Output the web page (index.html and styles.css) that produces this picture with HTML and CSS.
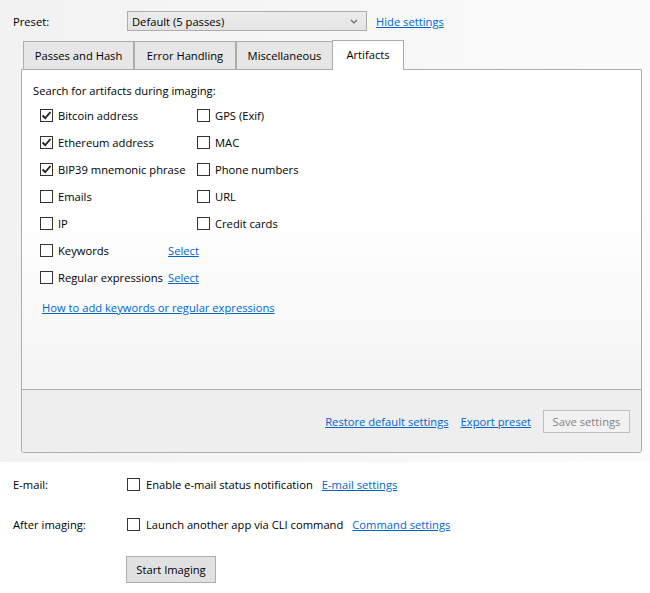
FILE: index.html
```html
<!DOCTYPE html>
<html>
<head>
<meta charset="utf-8">
<link rel="stylesheet" href="styles.css">
</head>
<body>
<div class="top">
  <div class="preset-row">
    <span class="label">Preset:</span>
    <div class="select"><span>Default (5 passes)</span>
      <svg class="chev" width="8" height="5" viewBox="0 0 8 5"><path d="M1 1 L4 4 L7 1" fill="none" stroke="#666" stroke-width="1.2"/></svg>
    </div>
    <a class="link hide-link">Hide settings</a>
  </div>
  <div class="tabs">
    <div class="tab tab-passes">Passes and Hash</div>
    <div class="tab tab-error">Error Handling</div>
    <div class="tab tab-misc">Miscellaneous</div>
    <div class="tab tab-art active">Artifacts</div>
  </div>
  <div class="panel">
    <div class="content">
      <div class="heading">Search for artifacts during imaging:</div>
      <div class="grid">
        <div class="item"><span class="cb checked"><svg width="11" height="11" viewBox="0 0 11 11"><path d="M1.5 5.5 L4.2 8.2 L9.5 2" fill="none" stroke="#222" stroke-width="1.8"/></svg></span>Bitcoin address</div>
        <div class="item"><span class="cb"></span>GPS (Exif)</div>
        <div class="item"><span class="cb checked"><svg width="11" height="11" viewBox="0 0 11 11"><path d="M1.5 5.5 L4.2 8.2 L9.5 2" fill="none" stroke="#222" stroke-width="1.8"/></svg></span>Ethereum address</div>
        <div class="item"><span class="cb"></span>MAC</div>
        <div class="item"><span class="cb checked"><svg width="11" height="11" viewBox="0 0 11 11"><path d="M1.5 5.5 L4.2 8.2 L9.5 2" fill="none" stroke="#222" stroke-width="1.8"/></svg></span>BIP39 mnemonic phrase</div>
        <div class="item"><span class="cb"></span>Phone numbers</div>
        <div class="item"><span class="cb"></span>Emails</div>
        <div class="item"><span class="cb"></span>URL</div>
        <div class="item"><span class="cb"></span>IP</div>
        <div class="item"><span class="cb"></span>Credit cards</div>
        <div class="item"><span class="cb"></span>Keywords</div>
        <div class="item"><a class="link select-link">Select</a></div>
        <div class="item"><span class="cb"></span>Regular expressions</div>
        <div class="item"><a class="link select-link">Select</a></div>
      </div>
      <a class="link howto">How to add keywords or regular expressions</a>
    </div>
    <div class="footer">
      <a class="link">Restore default settings</a>
      <a class="link">Export preset</a>
      <button class="btn disabled">Save settings</button>
    </div>
  </div>
</div>
<div class="bottom">
  <div class="row">
    <span class="label">E-mail:</span>
    <span class="cb"></span><span class="txt">Enable e-mail status notification</span><a class="link">E-mail settings</a>
  </div>
  <div class="row">
    <span class="label">After imaging:</span>
    <span class="cb"></span><span class="txt">Launch another app via CLI command</span><a class="link">Command settings</a>
  </div>
  <div class="row btn-row">
    <span class="label"></span>
    <button class="btn start">Start Imaging</button>
  </div>
</div>
</body>
</html>
```

FILE: styles.css
```css
* { box-sizing: border-box; }
html, body { margin: 0; padding: 0; }
body {
  width: 650px;
  height: 593px;
  overflow: hidden;
  font-family: "Open Sans", "Noto Sans", sans-serif;
  font-size: 11.2px;
  color: #000;
  background: #fff;
}
.link {
  color: #0066cc;
  text-decoration: underline;
  cursor: pointer;
}
.top {
  height: 462px;
  background: linear-gradient(to right, #f2f2f2, #fbfbfb);
  padding: 11px 9px 0 21px;
}
.preset-row {
  display: flex;
  align-items: center;
  height: 20px;
  margin-left: -8px;
}
.preset-row .label { width: 114px; }
.select {
  width: 240px;
  height: 20px;
  border: 1px solid #acacac;
  background: linear-gradient(#ececec, #e4e4e4);
  display: flex;
  align-items: center;
  justify-content: space-between;
  padding: 0 8px 0 4px;
}
.hide-link { margin-left: 9px; }
.tabs {
  display: flex;
  align-items: flex-end;
  margin-top: 9px;
  padding-left: 2px;
  height: 29px;
  position: relative;
  z-index: 1;
}
.tab {
  height: 28px;
  border: 1px solid #acacac;
  border-bottom: none;
  background: #e6e6e6;
  display: flex;
  align-items: center;
  justify-content: center;
}
.tab-passes { width: 111px; }
.tab-error { width: 102px; }
.tab-misc { width: 97px; margin-right: -1px; }
.tab.active {
  width: 72px;
  height: 30px;
  background: #fff;
  margin-bottom: -1px;
  padding-bottom: 3px;
}
.panel {
  width: 621px;
  border: 1px solid #acacac;
  border-radius: 0 0 3px 3px;
  overflow: hidden;
}
.content {
  height: 319px;
  background: linear-gradient(#ffffff 45%, #f4f4f4);
  padding: 13px 11px 0 11px;
}
.heading { line-height: 16px; }
.grid {
  display: grid;
  grid-template-columns: 157px auto;
  grid-auto-rows: 27px;
  margin-top: 3px;
  padding-left: 7px;
}
.item {
  display: flex;
  align-items: center;
  white-space: nowrap;
}
.cb {
  width: 13px;
  height: 13px;
  border: 1px solid #333;
  background: #fff;
  margin-right: 5px;
  flex: none;
  display: inline-flex;
  align-items: center;
  justify-content: center;
}
.select-link { margin-left: -29px; }
.howto {
  display: inline-block;
  margin-top: 9px;
  margin-left: 9px;
}
.footer {
  height: 63px;
  border-top: 1px solid #acacac;
  background: #eeeeee;
  display: flex;
  align-items: center;
  justify-content: flex-end;
  padding: 0 11px 0 0;
  gap: 12px;
}
.btn {
  font-family: inherit;
  font-size: 11.2px;
  height: 23px;
  padding: 0 8px;
}
.btn.disabled {
  border: 1px solid #bfbfbf;
  background: #f2f2f2;
  color: #838383;
  width: 87px;
}
.bottom {
  padding: 14px 0 0 13px;
}
.row {
  display: flex;
  align-items: center;
  height: 16px;
  margin-bottom: 24px;
}
.row .label { width: 114px; flex: none; }
.row .txt { margin-right: 9px; }
.row .cb { margin-right: 6px; }
.btn-row { margin-top: 6px; height: 27px; }
.btn.start {
  width: 90px;
  height: 27px;
  border: 1px solid #adadad;
  background: #e1e1e1;
  color: #000;
  margin-left: -1px;
}
```
